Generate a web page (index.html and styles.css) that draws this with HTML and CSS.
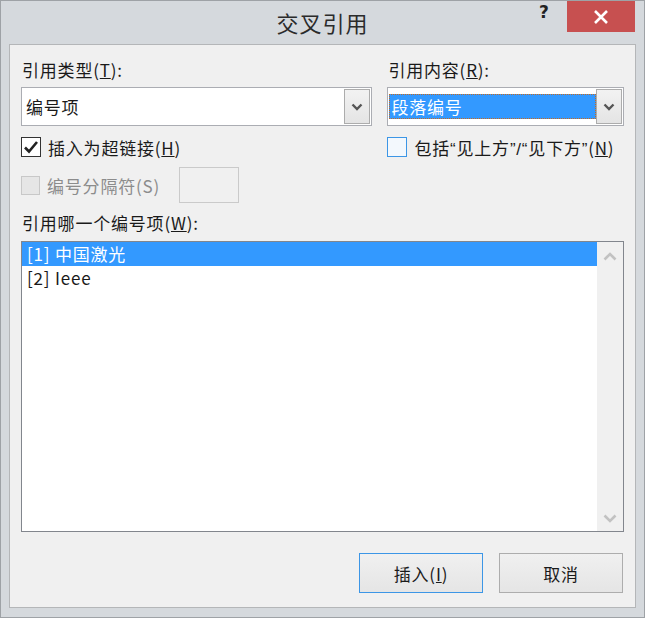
FILE: index.html
```html
<!DOCTYPE html>
<html>
<head>
<meta charset="utf-8">
<link rel="stylesheet" href="styles.css">
</head>
<body>
<div class="window">
  <div class="titlebar">
    <div class="title">交叉引用</div>
    <div class="help">?</div>
    <div class="close">
      <svg width="16" height="16" viewBox="0 0 16 16"><path d="M2 2 L14 14 M14 2 L2 14" stroke="#fff" stroke-width="2.6" fill="none"/></svg>
    </div>
  </div>
  <div class="client">
    <div class="cols">
      <div class="col left">
        <div class="label">引用类型(<u>T</u>):</div>
        <div class="combo">
          <div class="combo-text">编号项</div>
          <div class="combo-btn">
            <svg width="12" height="8" viewBox="0 0 12 8"><path d="M1.5 1.5 L6 6 L10.5 1.5" stroke="#555" stroke-width="2.4" fill="none"/></svg>
          </div>
        </div>
        <div class="check-row">
          <div class="checkbox">
            <svg width="18" height="18" viewBox="0 0 18 18"><path d="M3 9.5 L7 13.5 L15 4" stroke="#222" stroke-width="2.6" fill="none"/></svg>
          </div>
          <span>插入为超链接(<u>H</u>)</span>
        </div>
        <div class="sep-row">
          <div class="checkbox disabled"></div>
          <span class="disabled-text">编号分隔符(S)</span>
          <div class="textbox"></div>
        </div>
      </div>
      <div class="col right">
        <div class="label">引用内容(<u>R</u>):</div>
        <div class="combo">
          <div class="combo-text selected"><span>段落编号</span></div>
          <div class="combo-btn">
            <svg width="12" height="8" viewBox="0 0 12 8"><path d="M1.5 1.5 L6 6 L10.5 1.5" stroke="#555" stroke-width="2.4" fill="none"/></svg>
          </div>
        </div>
        <div class="check-row">
          <div class="checkbox blue"></div>
          <span class="nowrap">包括<span class="q">“</span>见上方<span class="q">”/“</span>见下方<span class="q">”</span>(<u>N</u>)</span>
        </div>
      </div>
    </div>
    <div class="label list-label">引用哪一个编号项(<u>W</u>):</div>
    <div class="listbox">
      <div class="items">
        <div class="item sel">[1] 中国激光</div>
        <div class="item">[2] Ieee</div>
      </div>
      <div class="scrollbar">
        <svg width="14" height="9" viewBox="0 0 14 9"><path d="M1.5 7.5 L7 2 L12.5 7.5" stroke="#c2c2c2" stroke-width="2.6" fill="none"/></svg>
        <svg width="14" height="9" viewBox="0 0 14 9"><path d="M1.5 1.5 L7 7 L12.5 1.5" stroke="#c2c2c2" stroke-width="2.6" fill="none"/></svg>
      </div>
    </div>
    <div class="buttons">
      <div class="btn default">插入(<u>I</u>)</div>
      <div class="btn">取消</div>
    </div>
  </div>
</div>
</body>
</html>
```
FILE: styles.css
```css
html, body {
  margin: 0;
  padding: 0;
  background: #d6dade;
}
body {
  font-family: "Noto Sans CJK SC", "Noto Sans", sans-serif;
  font-size: 17px;
  letter-spacing: 0.8px;
  color: #1a1a1a;
}
.window {
  box-sizing: border-box;
  width: 645px;
  height: 618px;
  border: 1px solid #9ea2a6;
  background: #d5d9dd;
  display: flex;
  flex-direction: column;
}
.titlebar {
  height: 43px;
  position: relative;
  display: flex;
  justify-content: center;
  align-items: flex-start;
}
.title {
  font-size: 22px;
  color: #2b2b2b;
  margin-top: 6px;
  line-height: 30px;
  letter-spacing: 1px;
}
.help {
  position: absolute;
  left: 538px;
  top: 1px;
  font-family: "DejaVu Sans", sans-serif;
  font-weight: bold;
  font-size: 17px;
  color: #222;
}
.close {
  position: absolute;
  left: 566px;
  top: 0;
  width: 68px;
  height: 31px;
  background: #c75050;
  display: flex;
  align-items: center;
  justify-content: center;
}
.client {
  box-sizing: border-box;
  margin: 0 8px 9px 8px;
  flex: 1;
  background: #f0f0f0;
  border: 1px solid #b4b6b8;
  padding: 14px 11px 0 11px;
  display: flex;
  flex-direction: column;
}
.cols {
  display: flex;
  gap: 15px;
}
.col.left { width: 352px; }
.col.right { width: 237px; }
.label {
  line-height: 22px;
  height: 22px;
  padding-left: 1px;
  white-space: nowrap;
}
.nowrap { white-space: nowrap; }
.q { font-family: "Liberation Sans", sans-serif; }
.combo {
  margin-top: 6px;
  box-sizing: border-box;
  height: 39px;
  border: 1px solid #abadb3;
  background: #fff;
  display: flex;
  align-items: stretch;
}
.combo-text {
  flex: 1;
  display: flex;
  align-items: center;
  padding-left: 4px;
}
.combo-text.selected {
  margin: 6px 0 6px 1px;
  padding-left: 2px;
  background: #3399ff;
  color: #fff;
  outline: 1px dotted #c86a1e;
  outline-offset: -1px;
}
.combo-btn {
  width: 26px;
  margin: 1px 1px 1px 0;
  box-sizing: border-box;
  border: 1px solid #acacac;
  background: linear-gradient(#f2f2f2, #e4e4e4);
  display: flex;
  align-items: center;
  justify-content: center;
}
.check-row {
  margin-top: 10px;
  height: 22px;
  display: flex;
  align-items: center;
  gap: 7px;
}
.checkbox {
  box-sizing: border-box;
  flex: none;
  width: 20px;
  height: 20px;
  border: 1px solid #333;
  background: #fff;
  display: flex;
  align-items: center;
  justify-content: center;
}
.checkbox.blue {
  border-color: #3c96e6;
  background: #f3f8fd;
}
.checkbox.disabled {
  border-color: #c8c8c8;
  background: #e6e6e6;
  width: 19px;
  height: 19px;
}
.sep-row {
  margin-top: 9px;
  display: flex;
  align-items: center;
  gap: 7px;
}
.disabled-text { color: #8c8c8c; white-space: nowrap; }
.textbox {
  margin-left: 12px;
  box-sizing: border-box;
  width: 60px;
  height: 36px;
  border: 1px solid #cacaca;
  background: #f0f0f0;
}
.list-label {
  margin-top: 9px;
}
.listbox {
  margin-top: 7px;
  box-sizing: border-box;
  width: 603px;
  height: 291px;
  border: 1px solid #82868d;
  background: #fff;
  display: flex;
}
.items {
  flex: 1;
}
.item {
  height: 24px;
  line-height: 24px;
  padding-left: 5px;
}
.item.sel {
  background: #3399ff;
  color: #fff;
}
.scrollbar {
  width: 26px;
  background: #f0f0f0;
  display: flex;
  flex-direction: column;
  justify-content: space-between;
  align-items: center;
  padding: 10px 0 8px;
}
.buttons {
  margin-top: 21px;
  display: flex;
  justify-content: flex-end;
  gap: 16px;
  padding-right: 1px;
}
.btn {
  box-sizing: border-box;
  width: 124px;
  height: 40px;
  border: 1px solid #adadad;
  background: linear-gradient(#f0f0f0, #e5e5e5);
  display: flex;
  align-items: center;
  justify-content: center;
}
.btn.default {
  border-color: #3c96e6;
}
```
